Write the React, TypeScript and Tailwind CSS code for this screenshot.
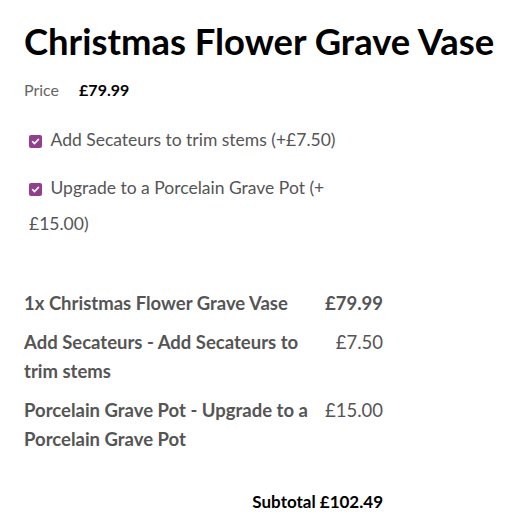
import React from "react";

function Check() {
  return (
    <span className="inline-flex h-[13px] w-[13px] shrink-0 items-center justify-center rounded-[2px] bg-[#923f90] align-middle">
      <svg width="9" height="9" viewBox="0 0 10 10">
        <path d="M1.8 5.2 L4 7.3 L8.3 2.6" fill="none" stroke="#fff" strokeWidth="1.8" strokeLinecap="round" strokeLinejoin="round" />
      </svg>
    </span>
  );
}

export default function App() {
  return (
    <div className="min-h-[532px] bg-white px-6 pt-[18px]" style={{ fontFamily: "Lato, sans-serif" }}>
      <h1 className="whitespace-nowrap text-[36.4px] font-bold leading-[46px] text-black">Christmas Flower Grave Vase</h1>
      <div className="mt-[14px] flex items-center gap-[20px] text-[16px] leading-[24px]">
        <span className="text-[#666]">Price</span>
        <span className="font-bold text-black">£79.99</span>
      </div>
      <div className="mt-[20px] pl-[5px] text-[17.5px] leading-[36px] text-[#555]">
        <p className="mb-[12px]">
          <Check /> <span className="ml-[4px]">Add Secateurs to trim stems (+£7.50)</span>
        </p>
        <p className="w-[310px]">
          <Check /> <span className="ml-[4px]">Upgrade to a Porcelain Grave Pot (+ £15.00)</span>
        </p>
      </div>
      <div className="mt-[42px] w-[359px] text-[18.5px] leading-[29px] text-[#555]">
        <div className="flex justify-between gap-3 py-[5px]">
          <span className="w-[295px] font-bold">1x Christmas Flower Grave Vase</span>
          <span className="font-bold">£79.99</span>
        </div>
        <div className="flex justify-between gap-3 py-[5px]">
          <span className="w-[295px] font-bold">Add Secateurs - Add Secateurs to trim stems</span>
          <span>£7.50</span>
        </div>
        <div className="flex justify-between gap-3 py-[5px]">
          <span className="w-[295px] font-bold">Porcelain Grave Pot - Upgrade to a Porcelain Grave Pot</span>
          <span>£15.00</span>
        </div>
        <div className="mt-[28px] text-right text-[17px] font-bold text-black">Subtotal £102.49</div>
      </div>
    </div>
  );
}
